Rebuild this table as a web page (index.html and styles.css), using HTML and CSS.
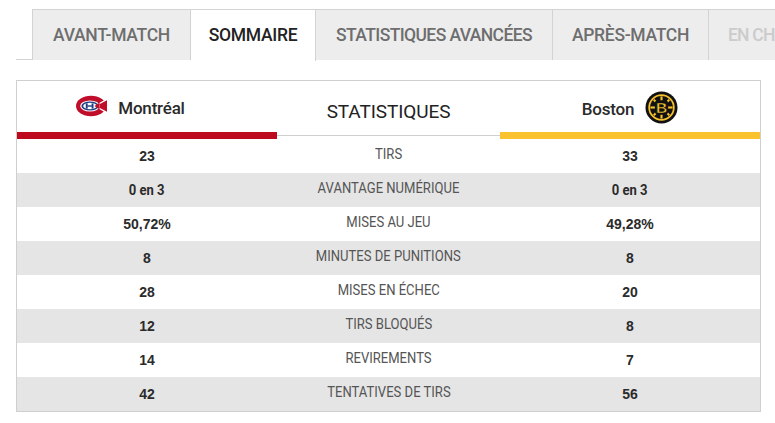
FILE: index.html
```html
<!DOCTYPE html>
<html lang="fr">
<head>
<meta charset="utf-8">
<title>Sommaire</title>
<link rel="stylesheet" href="styles.css">
</head>
<body>
<div class="page">
  <nav class="tabs">
    <div class="tab t1">AVANT-MATCH</div>
    <div class="tab t2 active">SOMMAIRE</div>
    <div class="tab t3">STATISTIQUES AVANCÉES</div>
    <div class="tab t4">APRÈS-MATCH</div>
    <div class="tab t5 disabled">EN CH</div>
  </nav>

  <section class="stats">
    <div class="head">
      <div class="team team-home">
        <svg class="logo" width="32" height="22" viewBox="0 0 32 22">
          <ellipse cx="16" cy="11" rx="16" ry="11" fill="#fff"/>
          <ellipse cx="16" cy="11" rx="15" ry="10.2" fill="#bf0d2a"/>
          <polygon points="19,11 32,3.5 32,18.5" fill="#fff"/>
          <polygon points="21,11 32,5.2 32,16.8" fill="#bf0d2a"/>
          <ellipse cx="15" cy="11" rx="9.8" ry="5.6" fill="#fff"/>
          <ellipse cx="15" cy="11" rx="8.6" ry="4.6" fill="#1f3b82"/>
          <ellipse cx="15" cy="11" rx="6.8" ry="3.2" fill="#fff"/>
          <rect x="10.8" y="8.4" width="1.9" height="5.2" fill="#1f3b82"/>
          <rect x="16.6" y="8.4" width="1.9" height="5.2" fill="#1f3b82"/>
          <rect x="12.5" y="10.3" width="4.4" height="1.4" fill="#1f3b82"/>
          <polygon points="19.5,11 24.5,7.6 24.5,14.4" fill="#bf0d2a"/>
        </svg>
        <span class="team-name">Montréal</span>
      </div>
      <div class="head-title">STATISTIQUES</div>
      <div class="team team-away">
        <span class="team-name">Boston</span>
        <svg class="logo" width="33" height="33" viewBox="0 0 34 34">
          <circle cx="17" cy="17" r="16.5" fill="#111"/>
          <circle cx="17" cy="17" r="13.6" fill="#f6c12f"/>
          <circle cx="17" cy="17" r="11.8" fill="#111"/>
          <g stroke="#f6c12f" stroke-width="2.2">
            <line x1="17" y1="5.6" x2="17" y2="28.4"/>
            <line x1="5.6" y1="17" x2="28.4" y2="17"/>
            <line x1="9" y1="9" x2="25" y2="25"/>
            <line x1="25" y1="9" x2="9" y2="25"/>
          </g>
          <rect x="10.2" y="9.6" width="13.6" height="14.8" rx="3.2" fill="#111"/>
          <text x="17" y="23" text-anchor="middle" class="b-letter">B</text>
        </svg>
      </div>
    </div>

    <div class="row"><div class="v">23</div><div class="lbl"><span>TIRS</span></div><div class="v">33</div></div>
    <div class="row alt"><div class="v"><span class="narrow">0 en 3</span></div><div class="lbl"><span>AVANTAGE NUMÉRIQUE</span></div><div class="v"><span class="narrow">0 en 3</span></div></div>
    <div class="row"><div class="v">50,72%</div><div class="lbl"><span>MISES AU JEU</span></div><div class="v">49,28%</div></div>
    <div class="row alt"><div class="v">8</div><div class="lbl"><span>MINUTES DE PUNITIONS</span></div><div class="v">8</div></div>
    <div class="row"><div class="v">28</div><div class="lbl"><span>MISES EN ÉCHEC</span></div><div class="v">20</div></div>
    <div class="row alt"><div class="v">12</div><div class="lbl"><span>TIRS BLOQUÉS</span></div><div class="v">8</div></div>
    <div class="row"><div class="v">14</div><div class="lbl"><span>REVIREMENTS</span></div><div class="v">7</div></div>
    <div class="row alt"><div class="v">42</div><div class="lbl"><span>TENTATIVES DE TIRS</span></div><div class="v">56</div></div>
  </section>
</div>
</body>
</html>
```

FILE: styles.css
```css
* { box-sizing: border-box; }

html, body {
  margin: 0;
  padding: 0;
  background: #fff;
}

body {
  font-family: Roboto, "Liberation Sans", Arial, sans-serif;
  color: #222;
  width: 775px;
  height: 423px;
  overflow: hidden;
}

.page {
  padding: 9px 0 0 16px;
}

/* ---------- tabs ---------- */
.tabs {
  display: flex;
  height: 51px;
  padding-left: 16px;
  border-bottom: 1px solid #d3d3d3;
  white-space: nowrap;
}

.tab {
  flex: none;
  height: 51px;
  line-height: 50px;
  text-align: center;
  background: #ededed;
  border-top: 1px solid #d3d3d3;
  border-right: 1px solid #d3d3d3;
  font-size: 17.5px;
  font-weight: 500;
  color: #6e6e6e;
  letter-spacing: -0.3px;
}

.t1 { width: 159px; border-left: 1px solid #d3d3d3; }
.t2 { width: 125px; }
.t3 { width: 237px; letter-spacing: -0.6px; }
.t4 { width: 156px; }
.t5 { width: 66px; text-align: left; padding-left: 19px; border-right: none; letter-spacing: -0.8px; }

.tab.active {
  background: #fff;
  color: #222;
  height: 52px;
  margin-bottom: -1px;
}

.tab.disabled {
  color: #cbcbcb;
}

/* ---------- stats table ---------- */
.stats {
  margin-top: 20px;
  width: 745px;
  border: 1px solid #cfcfcf;
}

.head {
  display: grid;
  grid-template-columns: 260px 223px 1fr;
  height: 58px;
  align-items: end;
}

.team {
  height: 58px;
  display: flex;
  align-items: center;
  justify-content: center;
  gap: 11px;
  padding-top: 2px;
}

.team-home {
  border-bottom: 7px solid #be0a1f;
  padding-right: 34px;
}

.team-away {
  border-bottom: 7px solid #f9c22e;
}

.team-name {
  font-size: 17px;
  font-weight: 500;
  color: #2a2a2a;
  letter-spacing: -0.2px;
}

.team-away .team-name { margin-top: 2px; }

.logo { display: block; }
.team-home .logo { margin-top: -3px; }

.b-letter {
  font-family: "Liberation Sans", Arial, sans-serif;
  font-weight: 700;
  font-size: 16px;
  fill: #f6c12f;
  stroke: #111;
  stroke-width: 0.5;
}

.head-title {
  height: 55px;
  margin-bottom: 3px;
  border-bottom: 1px solid #cfcfcf;
  display: flex;
  align-items: center;
  justify-content: center;
  padding-top: 7px;
  font-size: 19px;
  font-weight: 400;
  color: #222;
  letter-spacing: -0.1px;
}

.row {
  display: grid;
  grid-template-columns: 260px 223px 1fr;
  height: 34px;
  align-items: center;
  text-align: center;
}

.row.alt { background: #e5e5e5; }

.v {
  font-family: "Liberation Sans", Arial, sans-serif;
  font-weight: 700;
  font-size: 14px;
  color: #2b2b2b;
  padding-bottom: 1px;
}

.narrow {
  display: inline-block;
  font-family: Roboto, sans-serif;
  font-weight: 700;
  font-size: 15px;
  transform: scaleX(0.87);
}

.lbl {
  font-family: Roboto, sans-serif;
  font-size: 15px;
  color: #555;
  padding-bottom: 5px;
}

.lbl span {
  display: inline-block;
  white-space: nowrap;
  transform: scaleX(0.87);
}
```
